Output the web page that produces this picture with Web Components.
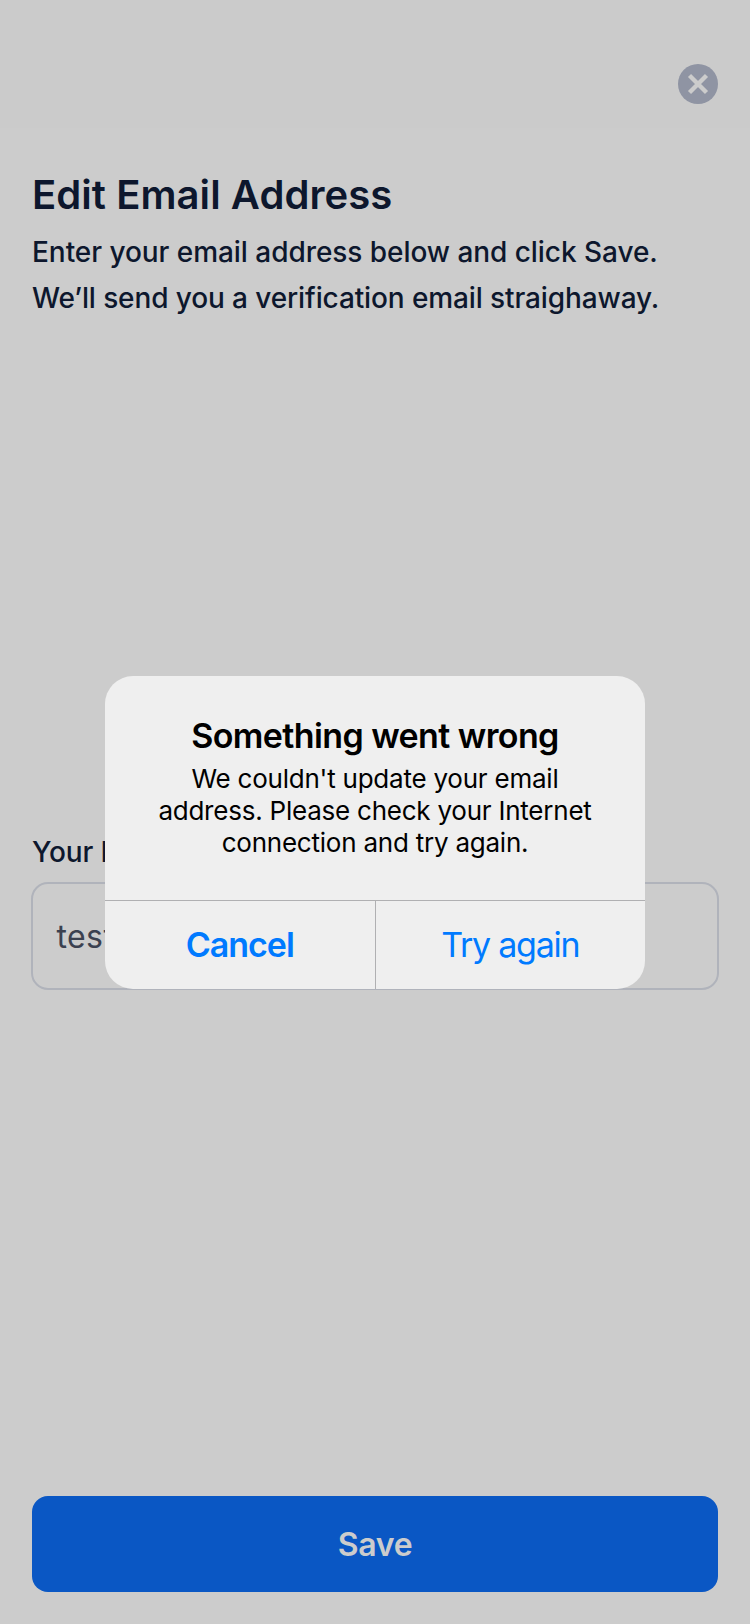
<!DOCTYPE html>
<html lang="en">
<head>
<meta charset="utf-8">
<title>Edit Email Address</title>
<style>
html,body{margin:0;padding:0;height:100%}
body{background:#ccc;font-family:Inter,"Liberation Sans",sans-serif;color:#0d172d;overflow:hidden}
</style>
</head>
<body>
<edit-email-screen></edit-email-screen>
<script>
function define(name, html){
  const t=document.createElement('template');
  t.innerHTML=html;
  customElements.define(name,class extends HTMLElement{
    constructor(){super();this.attachShadow({mode:'open'}).append(t.content.cloneNode(true));}
  });
}
define('close-button',`<style>
:host{display:block;width:40px;height:40px}
svg{display:block}
</style>
<svg width="40" height="40" viewBox="0 0 40 40" role="img" aria-label="Close"><circle cx="20" cy="20" r="20" fill="#8f94a3"/><path d="M11.5 11.5 28.5 28.5M28.5 11.5 11.5 28.5" stroke="#ccc" stroke-width="4.4" fill="none"/></svg>`);
define('nav-header',`<style>
:host{display:flex;box-sizing:border-box;height:128px;padding:64px 32px 0;justify-content:flex-end;flex:none;background:#cbcbcb}
</style><slot></slot>`);
define('page-intro',`<style>
:host{display:block;padding:43px 32px 0}
h1{margin:0;font-size:40px;line-height:48px;font-weight:600;letter-spacing:.07px}
p{margin:10px 0 0;font-size:28px;line-height:46px;font-weight:500;white-space:nowrap}
</style><h1><slot name="title"></slot></h1><p><slot></slot></p>`);
define('text-field',`<style>
:host{display:block;padding:0 31px}
label{display:block;padding-left:1px;font-size:28px;line-height:40px;font-weight:500;letter-spacing:-.1px}
.box{display:flex;align-items:center;box-sizing:border-box;height:108px;margin-top:10px;padding:2px 24px 0 23.5px;border:2px solid #b0b3bb;border-radius:17px;font-size:32px;line-height:40px;letter-spacing:.4px;color:#3b4150}
</style><label><slot name="label"></slot></label><div class="box"><slot></slot></div>`);
define('primary-button',`<style>
:host{display:flex;align-items:center;justify-content:center;box-sizing:border-box;height:96px;padding-top:2px;border-radius:16px;background:#0a57c4;color:#ccc;font-size:32px;line-height:40px;font-weight:600;letter-spacing:-.3px}
</style><slot></slot>`);
define('alert-action',`<style>
:host{display:flex;flex:1;align-items:center;justify-content:center;font-size:34px;line-height:42px;color:#007aff;letter-spacing:-1.25px}
:host([preferred]){font-weight:600;letter-spacing:-1px}
</style><slot></slot>`);
define('alert-dialog',`<style>
:host{display:flex;flex-direction:column;width:540px;height:313px;border-radius:28px;background:#efefef;color:#000;overflow:hidden}
.body{height:224px;text-align:center;padding-top:39px;box-sizing:border-box}
h2{margin:0;font-size:34px;line-height:42px;font-weight:600;letter-spacing:-.6px}
p{margin:6px 0 0;font-size:26px;line-height:32px;letter-spacing:-.23px}
.actions{display:flex;flex:1;border-top:1px solid #b0b0b2}
.sep{width:1px;background:#b0b0b2}
</style><div class="body"><h2><slot name="title"></slot></h2><p><slot></slot></p></div>
<div class="actions"><slot name="cancel"></slot><div class="sep"></div><slot name="retry"></slot></div>`);
define('edit-email-screen',`<style>
:host{display:flex;flex-direction:column;height:1624px;position:relative;box-sizing:border-box;width:750px}
text-field{margin-top:511px}
primary-button{margin:auto 32px 32px}
alert-dialog{position:absolute;left:105px;top:676px}
.line{display:block}
.l1{letter-spacing:-.05px}
.l2{letter-spacing:-.11px}
</style>
<nav-header><close-button></close-button></nav-header>
<page-intro><span slot="title">Edit Email Address</span><span class="line l1">Enter your email address below and click Save.</span><span class="line l2">We’ll send you a verification email straighaway.</span></page-intro>
<text-field><span slot="label">Your Email</span><span>test</span></text-field>
<primary-button>Save</primary-button>
<alert-dialog><span slot="title">Something went wrong</span><span class="line">We couldn't update your email</span><span class="line">address. Please check your Internet</span><span class="line">connection and try again.</span><alert-action slot="cancel" preferred>Cancel</alert-action><alert-action slot="retry">Try again</alert-action></alert-dialog>`);
</script>
</body>
</html>
